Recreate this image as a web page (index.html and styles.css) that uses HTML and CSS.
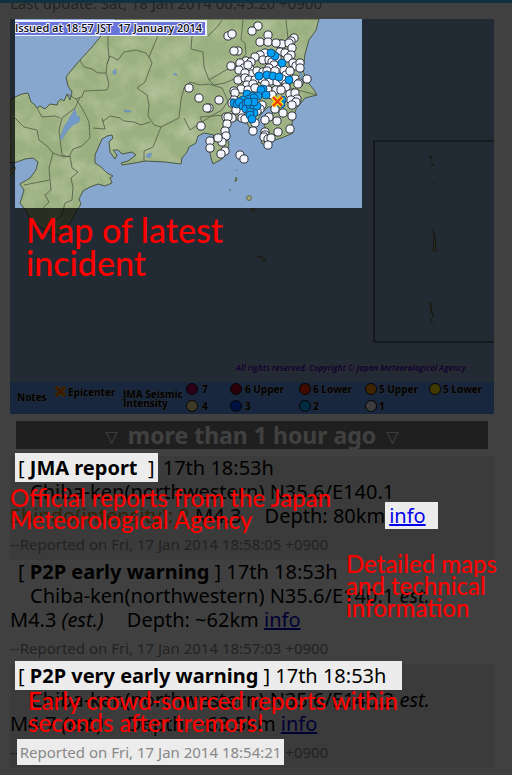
FILE: index.html
```html
<!DOCTYPE html>
<html lang="en">
<head>
<meta charset="utf-8">
<meta name="viewport" content="width=device-width, initial-scale=1">
<title>Earthquake reports</title>
<link rel="stylesheet" href="styles.css">
</head>
<body>
<div class="screen">
<main class="page">
  <header class="top"><p class="updated">Last update: Sat, 18 Jan 2014 00:45:20 +0900</p></header>

  <figure class="map">
    <svg viewBox="10 19 484 395" role="img" aria-label="Seismic intensity map">
      <defs>
        <marker id="one" markerUnits="userSpaceOnUse" markerWidth="12" markerHeight="12" refX="6" refY="6"><circle cx="6" cy="6" r="4.1" fill="#f6f6ff" stroke="#30343c"/></marker>
        <marker id="two" markerUnits="userSpaceOnUse" markerWidth="12" markerHeight="12" refX="6" refY="6"><circle cx="6" cy="6" r="4" fill="#00a0f8" stroke="#17507a"/></marker>
        <filter id="relief" x="0" y="0" width="100%" height="100%">
          <feTurbulence type="fractalNoise" baseFrequency=".05" numOctaves="4" seed="8"/>
          <feColorMatrix values="0 0 0 0 .83  0 0 0 0 .88  0 0 0 0 .68  1.8 0 0 0 -.65"/>
        </filter>
        <path id="coast" d="M116 19L110 27L100 37L92 47L80 60L74 67L66 77L68 86L72 92L70 100L67 94L64 101L61 99L58 102L57 105L50 104L45 109L40 106L37 108L34 104L31 102L29 96L28 93L22 94L15 97L10 100V163L17 162L25 159L33 158L38 162L36 170L30 178L20 184L24 190L22 197L20 203L26 211L30 219L39 226L50 233L60 236L66 228L72 220L76 212L81 204L79 199L83 191L90 187L98 184L105 186L112 183L110 178L113 176L107 173L101 167L95 163L95 155L99 146L102 139L107 136L112 135L113 138L109 142L110 152L115 159L117 155L113 150L118 150L122 154L132 152L136 155L128 161L121 163L122 165L135 163L145 161L165 162L181 164L182 158L187 152L189 147L196 143L198 136L204 133L214 135L212 141L209 148L211 158L213 164L222 159L227 152L229 144L226 136L222 128L228 120L238 120L246 122L250 128L253 128L256 122L262 113L268 107L275 107L272 114L266 120L264 126L267 131L262 139L261 143L268 146L275 140L284 137L293 133L292 123L296 109L305 98L317 95L314 90L306 80L303 70L305 54L309 40L316 30L319 19Z"/>
        <clipPath id="land"><use href="#coast"/></clipPath>
      </defs>

      <rect x="10" y="19" width="484" height="395" fill="#87a7cf"/>
      <use href="#coast" fill="#9bb080"/>
      <rect x="10" y="19" width="320" height="220" clip-path="url(#land)" filter="url(#relief)" opacity=".3"/>
      <use href="#coast" fill="none" stroke="#4b5744"/>
      <g fill="none" stroke="#59644c" stroke-width=".9" stroke-linejoin="round">
        <path d="M80 60L84 67L92 69L98 73L106 73L107 64L109 58L108 46L108 36M106 73L109 84L107 90L84 91L82 97L76 99M107 64L110 56L118 60L124 52L136 50L146 53L149 57L157 38L158 31M149 57L152 63L145 82L137 88L147 95L149 105L148 116L154 125L161 127L153 147L144 151V162M102 118L105 129L93 128M102 122L110 116L120 118L124 121L134 122L141 125L150 122M161 127L179 118L181 100L184 88L190 82L200 85L209 84L222 88L228 101L222 110L208 118L190 130L184 118M192 36L191 49L203 52L204 67L209 80L226 70L235 67M209 80L214 85L225 83L234 79M208 36L218 26L222 20M243 20L241 40L245 43L246 54L235 67M286 20L288 38L284 50L275 54M248 112L238 107L225 115L200 117L203 125M67 94L76 99L82 108L89 122L90 138L82 146L73 149L69 157L62 155L61 147L59 130L62 118L75 108L80 97M37 108L42 117L55 116L60 118M15 118L24 127L37 130L39 140L47 146L53 153L49 168L50 180L24 185M53 153L64 157L70 156L72 168L78 172L71 178L73 187L72 200L65 203L62 215L56 220M50 180L51 190L45 195L49 202L42 209M303 70L297 80L285 85L269 81M317 95L290 88"/>
      </g>
      <g fill="#7399c9" stroke="#6a8dae" stroke-width=".5">
        <path d="M75 109L77 116L80 117L79 122L73 125L68 130L64 136L62 140L60 138L64 127L69 119Z"/>
        <path d="M147 154L152 153L150 158L146 157ZM113 71l3-2v5h-3zM173 74l3-1 1 3zM300 69l2 5 4 6-3 1-4-7zM124 110l7 1v1h-6z"/>
      </g>
      <g fill="#a3ae79" stroke="#5b6450">
        <circle cx="249" cy="198" r="2.4"/><path d="M236 177l1 3-2 2zM236 170h1M230 189v2M10 171l3-4 3 1-6 8"/>
        <circle cx="253" cy="210" r="1.7"/><path d="M257 257l3-1 4 2 2 4-3-1-3-3zM261 298h1M428 150h1M430 155l2 3-2 1zM432 163l2 2-2 1zM434 182v2M433 229l2 6 1 16h-3l1-12zM429 302l2 1 1 9 2 3-1 2-2-6zM430 317l2 4-1 2M435 322l-2 2"/>
      </g>
      <path d="M494 141H374V342H494" fill="none" stroke="#343b48" stroke-width="1.2"/>

      <polyline fill="none" marker-start="url(#one)" marker-mid="url(#one)" marker-end="url(#one)" points="258,26 252,31 228,36 232,34 268,35 294,38 260,42 268,42 280,44 282,44 276,43 291,41 289,43 292,48 238,51 234,51 265,53 260,55 280,52 285,53 291,55 288,58 255,57 263,60 246,61 251,62 240,63 231,66 244,68 239,70 250,69 248,65 269,60 277,58 272,62 274,65 269,68 279,69 284,70 293,63 296,66 300,63 300,68 286,75 290,71 252,74 257,71 263,72 267,71 275,71 245,73 238,80 245,78 249,80 255,80 262,79 270,81 277,82 282,79 286,84 295,79 307,79 299,83 298,84 247,85 253,84 265,84 241,89 234,91 235,93 248,90 255,88 268,90 276,90 272,95 286,87 281,90 290,94 295,93 297,99 291,100 296,102 292,105 234,100 232,103 241,112 236,110 226,117 232,118 228,117 242,118 245,119 227,124 225,131 226,136 222,142 218,138 210,141 210,148 225,151 221,154 240,155 244,159 189,88 199,98 219,100 209,108 207,108 201,126 255,123 253,131 262,105 260,109 257,111 269,117 265,120 277,121 275,109 283,113 292,116 290,129 278,132 265,132 265,135 264,137 268,139 271,138 268,145"/>
      <polyline fill="none" marker-start="url(#two)" marker-mid="url(#two)" marker-end="url(#two)" points="275,56 271,53 282,63 259,76 267,75 273,76 279,77 289,80 263,89 261,90 266,95 247,94 253,96 258,96 249,99 254,98 243,100 234,103 237,104 239,102 243,106 246,103 246,109 250,105 254,107 257,106 254,102 248,102 254,113 250,112 250,115 252,119 282,100 281,104"/>
      <path d="M273 97l9 9M282 97l-9 9" stroke="#ffd500" stroke-width="5"/><path d="M273 97l9 9M282 97l-9 9" stroke="#eb3c0c" stroke-width="2.2"/>

      <rect x="15" y="20" width="192" height="16" fill="#eef0ff"/><rect x="15" y="22" width="190" height="13" fill="#6974d8"/>
      <text class="issued" x="15" y="32">Issued at 18:57 JST&#160; 17 January 2014</text>
      <text class="rights" x="236" y="371">All rights reserved. Copyright © Japan Meteorological Agency</text>

      <rect x="10" y="382" width="484" height="32" fill="#6098f8"/>
      <g class="key">
        <text x="17" y="401">Notes</text>
        <path d="M56 387l9 9M65 387l-9 9" stroke="#ffb400" stroke-width="4"/><path d="M56 387l9 9M65 387l-9 9" stroke="#e05c00" stroke-width="2"/>
        <text x="68" y="396">Epicenter</text><text x="123" y="398">JMA Seismic</text><text x="123" y="407">Intensity</text>
        <g stroke="#111" stroke-width="1">
          <circle cx="192" cy="389" r="5.5" fill="#b40068"/><circle cx="236" cy="389" r="5.5" fill="#a50021"/><circle cx="305" cy="389" r="5.5" fill="#ff2800"/><circle cx="371" cy="389" r="5.5" fill="#ff9900"/><circle cx="435" cy="389" r="5.5" fill="#ffe600"/>
          <circle cx="192" cy="406" r="5.5" fill="#fae696"/><circle cx="236" cy="406" r="5.5" fill="#0041ff"/><circle cx="305" cy="406" r="5.5" fill="#00aaff"/><circle cx="371" cy="406" r="5.5" fill="#f2f2ff"/>
        </g>
        <text x="202" y="393">7</text><text x="245" y="393">6 Upper</text><text x="313" y="393">6 Lower</text><text x="379" y="393">5 Upper</text><text x="443" y="393">5 Lower</text>
        <text x="202" y="410">4</text><text x="245" y="410">3</text><text x="313" y="410">2</text><text x="379" y="410">1</text>
      </g>
      <path d="M10 19H494V414H10ZM15 19V208H362V19Z" fill-rule="evenodd" fill="#000" fill-opacity=".75"/>
    </svg>
  </figure>

  <h2 class="age"><span class="tri">▽</span> more than 1 hour ago <span class="tri">▽</span></h2>

  <article class="report shaded">
    <h3><span class="lit">[ <b>JMA report</b>&nbsp; ]</span> 17th 18:53h</h3>
    <p class="place">Chiba-ken(northwestern) N35.6/E140.1</p>
    <p><span class="shindo">Shindo(intensity): 2</span> M4.3 <span class="depth">Depth: 80km</span><span class="lit link"><a href="#jma">info</a></span></p>
    <p class="stamp">--Reported on Fri, 17 Jan 2014 18:58:05 +0900</p>
  </article>
  <article class="report">
    <h3>[ <b>P2P early warning</b> ] 17th 18:53h</h3>
    <p class="place">Chiba-ken(northwestern) N35.6/E140.1 <i>est.</i></p>
    <p>M4.3 <i>(est.)</i> <span class="depth">Depth: ~62km</span> <a href="#p2p">info</a></p>
    <p class="stamp">--Reported on Fri, 17 Jan 2014 18:57:03 +0900</p>
  </article>
  <article class="report shaded">
    <h3><span class="lit long">[ <b>P2P very early warning</b> ] 17th 18:53h</span></h3>
    <p class="place">Chiba-ken(northwestern) N35.6/E140.2 <i>est.</i></p>
    <p>M4.7 <i>(est.)</i> <span class="depth">Depth: ~63.5km</span> <a href="#early">info</a></p>
    <p class="stamp">--<span class="lit time">Reported on Fri, 17 Jan 2014 18:54:21</span> +0900</p>
  </article>
  <article class="report faint">
    <h3>[ <b>JMA report</b>&nbsp; ] 17th 18:37h</h3>
  </article>
</main>
<div class="shade"></div>
<p class="note large note-map">Map of latest<br>incident</p>
<p class="note note-official">Official reports from the Japan<br>Meteorological Agency</p>
<p class="note note-info">Detailed maps<br>and technical<br>information</p>
<p class="note note-early">Early crowd-sourced reports within<br>seconds after tremors!</p>
</div>
</body>
</html>
```
FILE: styles.css
```css
* { box-sizing: border-box; }
body { margin: 0; background: #fff; color: #000; font: 20px/24px "Noto Sans", "Open Sans", sans-serif; }
p, h2, h3, figure { margin: 0; }
.screen { position: relative; height: 100vh; overflow: hidden; }
.page { padding: 0 18px 0 10px; }
.top { display: flex; align-items: flex-end; height: 19px; margin: 0 -18px 0 -10px; padding: 0 10px 6px; border-top: 3px solid #40c8ff; overflow: hidden; }
.updated { color: #888; font-size: 15px; line-height: 20px; height: 20px; flex: none; }
.map { position: relative; z-index: 2; }
.map svg { display: block; width: 100%; height: auto; }
.issued { font: 600 11px "Open Sans", sans-serif; fill: #101018; stroke: #f4f4ff; stroke-width: 2px; paint-order: stroke; }
.rights { font: italic bold 8px "Open Sans", sans-serif; fill: #2a1cc0; stroke: #b9a8c8; stroke-width: 2px; paint-order: stroke; }
.key text { font: bold 10px "Open Sans", sans-serif; fill: #000; stroke: #a8b4c8; stroke-width: 1px; paint-order: stroke; }
.age { margin: 7px 6px; background: #7c7c7c; color: #fff; font-size: 23px; line-height: 28px; text-align: center; white-space: nowrap; }
.tri { margin: 0 4px; font: 16px "DejaVu Sans", sans-serif; vertical-align: 2px; }
.report { height: 104px; white-space: nowrap; }
.shaded { background: #ececec; }
.faint { padding-top: 4px; color: #888; }
.report h3 { padding-left: 8px; font-size: inherit; font-weight: normal; }
.place { padding-left: 20px; }
.shindo { color: #c78a10; }
.depth { margin-left: 18px; }
.stamp { padding-top: 4px; color: #888; font-size: 15px; }
a { color: #00c; }
.lit { position: relative; z-index: 2; background: #ececec; padding: 1px 3px; margin: 0 -3px; }
.report h3 .lit { margin-right: 0; }
.link { padding: 0 12px 0 4px; margin: 0; }
.link a { color: #00e; }
.report h3 .long { padding-right: 16px; }
.time { padding: 3px 3px; }
.shade { position: absolute; inset: 0; z-index: 1; background: rgba(0, 0, 0, .75); }
.note { position: absolute; z-index: 3; color: #f00; font: 500 24px/22px Lato, sans-serif; white-space: nowrap; }
.large { font-size: 34px; line-height: 33px; }
.note-map { left: 26px; top: 213px; }
.note-official { left: 10px; top: 487px; }
.note-info { left: 346px; top: 553px; }
.note-early { left: 28px; top: 690px; }
```
